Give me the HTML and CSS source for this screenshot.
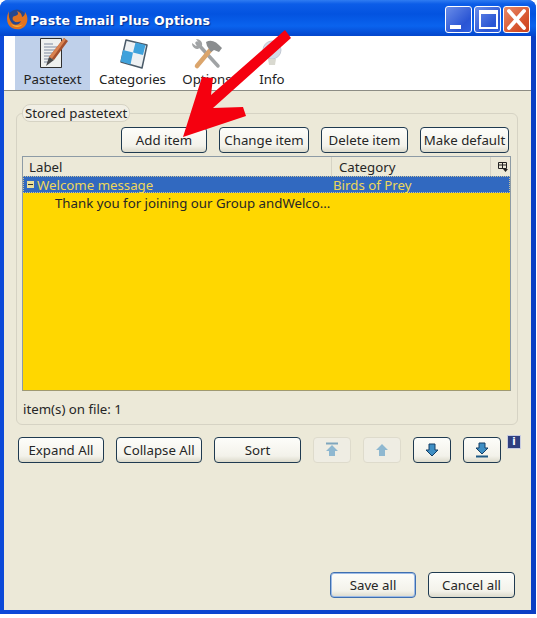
FILE: index.html
```html
<!DOCTYPE html>
<html lang="en">
<head>
    <meta charset="UTF-8">
    <title>Paste Email Plus Options</title>
    <link rel="stylesheet" href="styles.css">
</head>
<body>
    <div class="window">
        <div class="titlebar">
            <svg class="app-icon" width="22" height="22" viewBox="0 0 22 22">
                <circle cx="11" cy="11" r="9.500" fill="#27488f"/>
                <path d="M3 3c-3 6-3 13 3 17 6 3 13 1 15-6 1-4 0-7-2-10 0 3-1 4-3 5 0-3-2-5-5-6 2 3 1 4-2 5-3 0-3 4-1 5 2 2 5 1 7 0-1 3-5 5-8 3C4 14 2 9 3 3z" fill="#e2731f"/>
                <path d="M5 16c3 4 9 4 12 0-3 2-8 2-12 0z" fill="#f6b33c"/>
            </svg>
            <span class="title">Paste Email Plus Options</span>
            <div class="win-buttons">
                <div class="win-btn"><span class="min-bar"></span></div>
                <div class="win-btn"><span class="max-box"></span></div>
                <div class="win-btn close">
                    <svg width="25" height="25" viewBox="0 0 25 25"><path d="M5 4l15 17M20 4L5 21" stroke="#fff" stroke-width="3.800" stroke-linecap="round"/></svg>
                </div>
            </div>
        </div>

        <div class="toolbar">
            <div class="tab active">
                <svg width="32" height="34" viewBox="0 0 32 34">
                    <path d="M3.500 1.500h21v29h-21z" fill="#eef0ee" stroke="#2f2f2f"/>
                    <path d="M7 7h9M7 10h13M7 13h13M7 16h11M7 19h9M7 22h7M7 25h6" stroke="#7f8aa0"/>
                    <path d="M27 1l4 3-14 19-5-3z" fill="#a4502e"/>
                    <path d="M27 1l2 1.500-14 19-3-1.500z" fill="#d98250"/>
                    <path d="M12 20l5 3-8 6z" fill="#4a4a4a"/>
                </svg>
                <span>Pastetext</span>
            </div>
            <div class="tab categories">
                <svg width="32" height="34" viewBox="0 0 32 34">
                    <path d="M9 3l21 5-5 23-21-6z" fill="#eef1f3" stroke="#4a5a68" stroke-width="1.500" stroke-linejoin="round"/>
                    <path d="M18.500 5.500l10 2.500-2.500 10-10-2.500zM6 13l10 2.500-2.500 12-10-3z" fill="#3fa2dc"/>
                </svg>
                <span>Categories</span>
            </div>
            <div class="tab options">
                <svg width="32" height="34" viewBox="0 0 32 34">
                    <path d="M6 6l21 23" stroke="#a0a3a5" stroke-width="3.500" stroke-linecap="round"/>
                    <path d="M6 29L21 11" stroke="#dba56c" stroke-width="4.500" stroke-linecap="round"/>
                    <path d="M15 5c5-3 10-1 16 6l-3 4-5-2-3 2-4-6z" fill="#8a8d8f"/>
                    <path d="M1 6l4 3 3-3-3-4c4 0 7 3 6 7l-4 3C4 12 1 10 1 6z" fill="#a2a4a5"/>
                </svg>
                <span>Options</span>
            </div>
            <div class="tab info">
                <svg width="32" height="34" viewBox="0 0 32 34">
                    <circle cx="16" cy="13" r="9" fill="#d2dbe9" stroke="#c2c8d2"/>
                    <path d="M12 22h8l-1 6h-6z" fill="#d9d9d0"/>
                </svg>
                <span>Info</span>
            </div>
        </div>

        <div class="content">
            <fieldset class="group">
                <legend>Stored pastetext</legend>
                <div class="item-buttons">
                    <button class="btn">Add item</button>
                    <button class="btn">Change item</button>
                    <button class="btn">Delete item</button>
                    <button class="btn">Make default</button>
                </div>
                <div class="tree">
                    <div class="tree-head">
                        <div class="col-label">Label</div>
                        <div class="col-category">Category</div>
                        <div class="col-picker">
                            <svg width="11" height="11" viewBox="0 0 11 11"><path d="M1.500 1.500h8v6h-8zM1.500 4h8M5.500 1.500v6" fill="none" stroke="#222"/><path d="M6 8h5l-2.500 3z" fill="#222"/></svg>
                        </div>
                    </div>
                    <div class="tree-row selected">
                        <span class="twisty"></span>
                        <span class="row-label">Welcome message</span>
                        <span class="row-category">Birds of Prey</span>
                    </div>
                    <div class="tree-child">Thank you for joining our Group andWelco...</div>
                </div>
                <div class="count">item(s) on file: 1</div>
            </fieldset>

            <div class="list-buttons">
                <button class="btn">Expand All</button>
                <button class="btn">Collapse All</button>
                <button class="btn">Sort</button>
                <button class="btn arrow disabled">
                    <svg width="16" height="16" viewBox="0 0 16 16"><path d="M2 1.500h12" stroke="#7fa6bd" stroke-width="2"/><path d="M8 3l6 6h-3v5H5V9H2z" fill="#8fb8d0"/></svg>
                </button>
                <button class="btn arrow disabled">
                    <svg width="16" height="16" viewBox="0 0 16 16"><path d="M8 2l6 6h-3v6H5V8H2z" fill="#8fb8d0"/></svg>
                </button>
                <button class="btn arrow">
                    <svg width="16" height="16" viewBox="0 0 16 16"><path d="M8 14L2 8h3V2h6v6h3z" fill="#3f8fc4" stroke="#143f66"/></svg>
                </button>
                <button class="btn arrow">
                    <svg width="16" height="16" viewBox="0 0 16 16"><path d="M8 12L2 6h3V1h6v5h3z" fill="#3f8fc4" stroke="#143f66"/><path d="M2 14.500h12" stroke="#1f5a85" stroke-width="2"/></svg>
                </button>
                <div class="info-badge">i</div>
            </div>

            <div class="dialog-buttons">
                <button class="btn default">Save all</button>
                <button class="btn">Cancel all</button>
            </div>
        </div>
    </div>

    <!-- hand drawn arrow on top of the screenshot -->
    <svg class="red-arrow" width="537" height="618" viewBox="0 0 537 618">
        <path d="M285 30L291 38L213 108L243 107L246 116L183 137L202 77L213 78L211 95z" fill="#f5000f"/>
    </svg>
</body>
</html>
```

FILE: styles.css
```css
html, body {
    margin: 0;
    padding: 0;
    background-color: white;
}

body {
    position: relative;
    width: 537px;
    height: 618px;
    overflow: hidden;
    font-family: "Noto Sans", "Liberation Sans", sans-serif;
    font-size: 13.250px;
    color: #262626;
}

.window {
    display: flex;
    flex-direction: column;
    width: 536px;
    height: 614px;
    box-sizing: border-box;
    background: linear-gradient(90deg, #0c49d8, #0a3fc4);
    border-radius: 8px 8px 0 0;
    padding: 0 5px 4px 4px;
}

.titlebar {
    display: flex;
    align-items: center;
    height: 36px;
    margin: 0 -5px 0 -4px;
    padding: 2px 6px 0 6px;
    box-sizing: border-box;
    flex-shrink: 0;
    border-radius: 8px 8px 0 0;
    background: linear-gradient(#2f7cf2 0, #0c5de8 4px, #0353e0 14px, #0a63ee 26px, #0448cf 35px);
}

.app-icon {
    margin-right: 2px;
}

.title {
    flex: 1;
    padding-top: 3px;
    color: white;
    font-family: "DejaVu Sans", sans-serif;
    font-weight: bold;
    font-size: 12.500px;
    letter-spacing: 0.200px;
    text-shadow: 1px 1px 1px #0b2f8c;
}

.win-buttons {
    display: flex;
    gap: 2px;
}

.win-btn {
    position: relative;
    width: 27px;
    height: 27px;
    box-sizing: border-box;
    border: 1px solid white;
    border-radius: 3px;
    background: linear-gradient(135deg, #6a8de8, #2a55d4 70%, #2f5fe0);
}

.min-bar {
    position: absolute;
    left: 4px;
    top: 18px;
    width: 11px;
    height: 4px;
    background-color: white;
}

.max-box {
    position: absolute;
    left: 4px;
    top: 3px;
    width: 15px;
    height: 13px;
    border: 2px solid white;
    border-top-width: 4px;
}

.close {
    background: linear-gradient(135deg, #e88a68, #d6512a 70%, #c9431f);
}

.close svg {
    display: block;
    margin: 0;
}

.toolbar {
    display: flex;
    height: 55px;
    padding-left: 11px;
    box-sizing: border-box;
    flex-shrink: 0;
    background-color: white;
    border-bottom: 1px solid #8c8c84;
}

.tab {
    display: flex;
    flex-direction: column;
    align-items: center;
    width: 75px;
    color: #222;
}

.tab svg {
    height: 34px;
    flex-shrink: 0;
    margin-top: 1px;
}

.tab span {
    line-height: 16px;
}

.tab.active {
    background-color: #bfd0ea;
}

.categories {
    margin-left: 5px;
}

.options {
    width: 74px;
}

.info {
    width: 56px;
}

.content {
    display: flex;
    flex-direction: column;
    flex: 1;
    background-color: #ece9d8;
    padding: 13px 13px 12px 12px;
}

.group {
    margin: 0;
    padding: 0 6px 0 5px;
    height: 321px;
    box-sizing: border-box;
    border: 1px solid #d6d3c4;
    border-radius: 6px;
}

.group legend {
    margin-left: 0;
    padding: 0 2px;
    line-height: 16px;
    border: 1px solid #d6d3c4;
    border-radius: 8px;
    background-color: #f1efe5;
}

.btn {
    height: 26px;
    padding: 0;
    box-sizing: border-box;
    border: 1px solid #1f3a50;
    border-radius: 4px;
    background: linear-gradient(#fdfdfa, #f3f2ea 75%, #dcdacb);
    color: #262626;
    font: inherit;
    white-space: nowrap;
}

.item-buttons {
    display: flex;
    justify-content: flex-end;
    gap: 12px;
    padding-right: 2px;
    margin-top: 5px;
}

.item-buttons .btn {
    width: 87px;
}

.item-buttons .btn:first-child {
    width: 86px;
}

.item-buttons .btn:nth-child(2) {
    width: 90px;
}

.item-buttons .btn:nth-child(4) {
    width: 89px;
}

.tree {
    height: 235px;
    margin-top: 3px;
    box-sizing: border-box;
    border: 1px solid #8d9ba5;
    border-bottom-color: #a09a70;
    background-color: #ffd700;
}

.tree-head {
    display: flex;
    height: 19px;
    background-color: #ece9d8;
    line-height: 20px;
}

.col-label {
    width: 308px;
    padding-left: 6px;
    box-sizing: border-box;
}

.col-category {
    flex: 1;
    padding-left: 7px;
    border-left: 1px solid #d6d3c4;
}

.col-picker {
    width: 20px;
    padding-left: 6px;
    box-sizing: border-box;
    border-left: 1px solid #d6d3c4;
}

.col-picker svg {
    display: block;
    margin-top: 4px;
}

.tree-row {
    display: flex;
    align-items: center;
    height: 17px;
    box-sizing: border-box;
    background-color: #3169c0;
    border: 1px dotted #c9c29a;
    color: #eed75a;
}

.twisty {
    position: relative;
    width: 7px;
    height: 7px;
    margin: 0 3px 0 3px;
    background-color: #eadf9a;
}

.twisty::after {
    content: "";
    position: absolute;
    left: 1px;
    top: 3px;
    width: 5px;
    height: 1px;
    background-color: #333;
}

.row-label {
    width: 296px;
}

.tree-child {
    padding-left: 32px;
    line-height: 20px;
}

.count {
    margin-top: 10px;
    padding-left: 1px;
    line-height: 16px;
}

.list-buttons {
    position: relative;
    display: flex;
    gap: 12px;
    margin-top: 12px;
    padding-left: 2px;
}

.list-buttons .btn {
    width: 86px;
}

.list-buttons .btn:nth-child(3) {
    width: 87px;
}

.list-buttons .btn.arrow {
    display: flex;
    align-items: center;
    justify-content: center;
    width: 38px;
}

.btn.disabled {
    border-color: #dedbcc;
    background: #efede3;
}

.info-badge {
    position: absolute;
    left: 491px;
    top: -2px;
    width: 12px;
    height: 12px;
    border: 1px solid #c8cce0;
    background-color: #2f3f7f;
    color: white;
    font-family: "DejaVu Sans", sans-serif;
    font-size: 10px;
    font-weight: bold;
    line-height: 12px;
    text-align: center;
}

.dialog-buttons {
    display: flex;
    justify-content: flex-end;
    gap: 12px;
    margin-top: auto;
    padding-right: 3px;
}

.dialog-buttons .btn {
    width: 86px;
}

.dialog-buttons .btn:last-child {
    width: 87px;
}

.btn.default {
    border-color: #3f6fb0;
    box-shadow: inset 0 0 0 1px #9dbbe6;
}

.red-arrow {
    position: absolute;
    left: 0;
    top: 0;
    pointer-events: none;
}
```
